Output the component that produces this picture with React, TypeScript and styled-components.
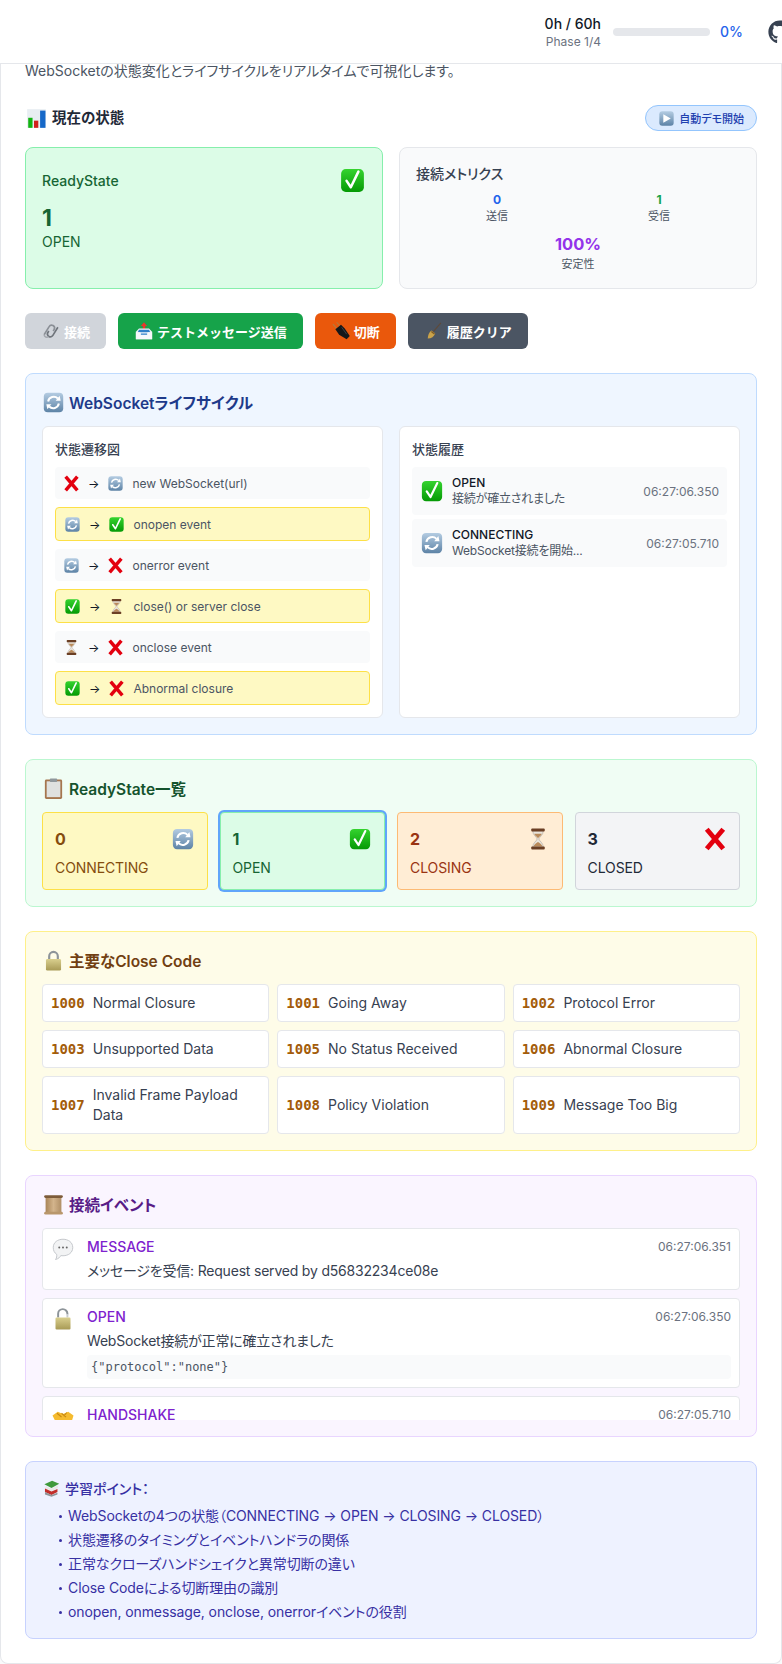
import type { ReactNode } from 'react';
import { createGlobalStyle, styled } from 'styled-components';
import { FaGithub } from 'react-icons/fa';

const GlobalStyle = createGlobalStyle`
  * { box-sizing: border-box; }
  body {
    margin: 0;
    background: #f9fafb;
    color: #111827;
    font-family: Inter, "Noto Sans CJK JP", sans-serif;
    font-feature-settings: "palt";
  }
  h2, h3, h4, p, ul { margin: 0; padding: 0; }
`;

type EmojiName =
  | 'check' | 'cross' | 'refresh' | 'hourglass' | 'chart' | 'play' | 'link' | 'outbox' | 'plug'
  | 'broom' | 'clipboard' | 'lock' | 'openLock' | 'scroll' | 'speech' | 'handshake' | 'books';

const boxGradient = (
  <defs>
    <linearGradient id="steel" x1="0" y1="0" x2="0" y2="1">
      <stop offset="0" stopColor="#b4cce2" />
      <stop offset="1" stopColor="#5d83a6" />
    </linearGradient>
    <linearGradient id="greenbox" x1="0" y1="0" x2="0" y2="1">
      <stop offset="0" stopColor="#35d32f" />
      <stop offset="1" stopColor="#059a05" />
    </linearGradient>
    <linearGradient id="brass" x1="0" y1="0" x2="0" y2="1">
      <stop offset="0" stopColor="#d9cf8e" />
      <stop offset="1" stopColor="#a89a55" />
    </linearGradient>
    <linearGradient id="parchment" x1="0" y1="0" x2="1" y2="0">
      <stop offset="0" stopColor="#a98558" />
      <stop offset="0.5" stopColor="#d3b48c" />
      <stop offset="1" stopColor="#b08f66" />
    </linearGradient>
  </defs>
);

const emojiGlyphs: Record<EmojiName, ReactNode> = {
  check: (
    <>
      <rect x="2.5" y="2.5" width="27" height="27" rx="5.5" fill="url(#greenbox)" />
      <path d="M9 16.5l5 7.5L23 5.5" fill="none" stroke="#fff" strokeWidth="3" strokeLinecap="round" strokeLinejoin="round" />
    </>
  ),
  cross: <path d="M5 3L27 29M27 3L5 29" stroke="#e3000f" strokeWidth="6.5" />,
  refresh: (
    <>
      <rect x="2.5" y="2.5" width="27" height="27" rx="5.5" fill="url(#steel)" />
      <path d="M8.5 14.5a8 8 0 0 1 13.5-4" fill="none" stroke="#fff" strokeWidth="2.8" />
      <path d="M19 13.5h7l-1.5-7z" fill="#fff" />
      <path d="M23.5 17.5a8 8 0 0 1-13.5 4" fill="none" stroke="#fff" strokeWidth="2.8" />
      <path d="M13 18.5H6l1.5 7z" fill="#fff" />
    </>
  ),
  hourglass: (
    <>
      <path d="M9 5h14c0 6-5 8-6 11 1 3 6 5 6 11H9c0-6 5-8 6-11-1-3-6-5-6-11z" fill="#e9e4dc" stroke="#b9b0a6" />
      <path d="M11 9h10c-1 3-4 4-5 6-1-2-4-3-5-6zM10 26c1-3 4-5 6-6 2 1 5 3 6 6z" fill="#b98a5a" />
      <rect x="7" y="2" width="18" height="4" rx="1.2" fill="#6b3f24" />
      <rect x="7" y="26" width="18" height="4" rx="1.2" fill="#6b3f24" />
    </>
  ),
  chart: (
    <>
      <rect x="3" y="3" width="26" height="26" fill="#e8eef2" />
      <rect x="4.5" y="15" width="6" height="14" fill="#12b312" />
      <rect x="12.5" y="19" width="6" height="10" fill="#d0201c" />
      <rect x="21" y="5" width="7.5" height="24" fill="#1668c8" />
    </>
  ),
  play: (
    <>
      <rect x="2.5" y="2.5" width="27" height="27" rx="5.5" fill="url(#steel)" />
      <path d="M10 8l14 8-14 8z" fill="#fff" />
    </>
  ),
  link: (
    <>
      <path d="M5 22l8-13a4.6 4.6 0 0 1 8 4.6l-1.5 2.4" fill="none" stroke="#8a8f96" strokeWidth="2.6" />
      <path d="M27 10l-8 13a4.6 4.6 0 0 1-8-4.6l1.5-2.4" fill="none" stroke="#6f747b" strokeWidth="2.6" />
      <path d="M5 22a4.4 4.4 0 0 0 7 3" fill="none" stroke="#a4a8ae" strokeWidth="2.6" />
    </>
  ),
  outbox: (
    <>
      <path d="M16 2l5 6h-3v8h-4V8h-3z" fill="#e8362c" />
      <path d="M3 17l5-5h16l5 5v12H3z" fill="#eef3f7" />
      <path d="M6 18h20l-2-4H8z" fill="#2e7fc9" />
      <path d="M3 18h7l2 4h8l2-4h7v11H3z" fill="#f5f8fb" />
      <path d="M11 20h10v2H11z" fill="#2e7fc9" />
    </>
  ),
  plug: (
    <>
      <path d="M3 5l8 9M9 2l7 8" stroke="#b07c40" strokeWidth="1.8" />
      <path d="M7 13l9-7 6 6 8 12-5 5-12-7z" fill="#15171a" />
      <path d="M17 10l8 11" stroke="#4a4e54" strokeWidth="1.2" />
    </>
  ),
  broom: (
    <>
      <path d="M27 3L15 17" stroke="#5e4a3a" strokeWidth="1.8" />
      <path d="M12 15l6 5c-2 5-6 8-12 8 0-5 2-10 6-13z" fill="#c9a24a" />
      <path d="M12.5 16l5 4-1.4 1.4-5-4z" fill="#7c5a26" />
    </>
  ),
  clipboard: (
    <>
      <rect x="4" y="3.5" width="24" height="27" rx="2" fill="#a5764e" />
      <rect x="6.5" y="6" width="19" height="22" fill="#dfe1df" />
      <rect x="11" y="2" width="10" height="5" rx="1" fill="#8f979b" />
    </>
  ),
  lock: (
    <>
      <path d="M10 15V10a6 6 0 0 1 12 0v5" fill="none" stroke="#8d9499" strokeWidth="3" />
      <rect x="5.5" y="14" width="21" height="16" rx="2" fill="url(#brass)" />
    </>
  ),
  openLock: (
    <>
      <path d="M9.5 14V9a6.2 6.2 0 0 1 12.4 0v1" fill="none" stroke="#8d9499" strokeWidth="2.6" />
      <path d="M21.9 10v4" stroke="#c9ccce" strokeWidth="2.6" />
      <rect x="6" y="14" width="20" height="16" rx="1.5" fill="url(#brass)" />
    </>
  ),
  scroll: (
    <>
      <rect x="5" y="5" width="22" height="23" fill="url(#parchment)" />
      <rect x="3" y="3" width="26" height="4" rx="2" fill="#7d5c3a" />
      <rect x="3" y="26" width="26" height="4" rx="2" fill="#b9976c" />
    </>
  ),
  speech: (
    <>
      <path d="M16 3c7 0 13 4 13 11s-6 11-13 11c-1 0-2 0-3-.2C12 27 10 29 6 30c1.500-2 2-4.500 1.500-7C4.500 21 3 18 3 14 3 7 9 3 16 3z" fill="#f2f3f4" stroke="#bfc3c7" strokeWidth="1.2" />
      <circle cx="11" cy="14" r="1.300" fill="#666" />
      <circle cx="16" cy="14" r="1.300" fill="#666" />
      <circle cx="21" cy="14" r="1.300" fill="#666" />
    </>
  ),
  handshake: (
    <>
      <path d="M2 14l7-5 7 3 7-3 7 5-3 10-5 3-7 0-9-5z" fill="#f5bb2f" />
      <path d="M8 11l6 5M14 11l6 5M21 10l-4 5" stroke="#c98a12" strokeWidth="1.500" />
    </>
  ),
  books: (
    <>
      <path d="M4 9l13-6 12 5-13 7z" fill="#3f9a3c" />
      <path d="M6 12l10 4 11-5v4l-11 5-10-4z" fill="#e9e9e6" />
      <path d="M5 16l11 5 10-4v5l-10 5-11-5z" fill="#c22f2b" />
      <path d="M5 22l11 5 10-4v3l-10 4-11-4z" fill="#8f9498" />
    </>
  ),
};

const EmojiSvg = styled.svg<{ $size: number }>`
  display: block;
  flex-shrink: 0;
  width: ${({ $size }) => $size}px;
  height: ${({ $size }) => $size}px;
`;

const Emoji = ({ name, size }: { name: EmojiName; size: number }) => (
  <EmojiSvg $size={size} viewBox="0 0 32 32" aria-hidden="true">
    {boxGradient}
    {emojiGlyphs[name]}
  </EmojiSvg>
);

const TopBar = styled.header`
  display: flex;
  justify-content: flex-end;
  align-items: center;
  height: 64px;
  overflow: hidden;
  background: #fff;
  border-bottom: 1px solid #e5e7eb;
  box-shadow: 0 1px 2px rgba(0, 0, 0, 0.05);
`;

const TopBarInner = styled.div`
  display: flex;
  flex-shrink: 0;
  align-items: center;
  margin-right: -10px;
  color: #374151;
`;

const TimeBlock = styled.div`
  text-align: right;
  margin-right: 12px;
`;

const TimeValue = styled.div`
  font-size: 14px;
  line-height: 20px;
  font-weight: 500;
  color: #111827;
`;

const PhaseLabel = styled.div`
  font-size: 12px;
  line-height: 16px;
  color: #6b7280;
`;

const ProgressTrack = styled.div`
  width: 97px;
  height: 8px;
  border-radius: 4px;
  background: #e5e7eb;
`;

const ProgressValue = styled.span`
  width: 24px;
  margin: 0 24px 0 10px;
  font-size: 14px;
  font-weight: 500;
  color: #2563eb;
`;

const Card = styled.main`
  background: #fff;
  border: 1px solid #e5e7eb;
  border-top: 0;
  border-radius: 0 0 8px 8px;
  padding: 0 24px 24px;
`;

const Description = styled.p`
  font-size: 14px;
  line-height: 14px;
  color: #4b5563;
`;

const StatusHead = styled.div`
  display: flex;
  justify-content: space-between;
  align-items: center;
  height: 26px;
  margin-top: 27px;
`;

const StatusTitle = styled.h2`
  display: flex;
  align-items: center;
  gap: 4px;
  font-size: 14.5px;
  line-height: 24px;
  font-weight: 600;
  color: #1f2937;
`;

const DemoButton = styled.button`
  display: flex;
  align-items: center;
  gap: 4px;
  height: 26px;
  padding: 0 12px;
  border: 1px solid #93c5fd;
  border-radius: 13px;
  background: #dbeafe;
  color: #1e40af;
  font: inherit;
  font-size: 11px;
  font-weight: 500;
`;

const TopGrid = styled.div`
  display: grid;
  grid-template-columns: 1fr 1fr;
  gap: 16px;
  margin-top: 16px;
`;

const StateCard = styled.section`
  height: 142px;
  padding: 19px 16px;
  background: #dcfce7;
  border: 1px solid #86efac;
  border-radius: 8px;
  color: #166534;
`;

const StateCardHead = styled.div`
  display: flex;
  justify-content: space-between;
  align-items: center;
  font-size: 14px;
  font-weight: 500;
`;

const StateNumber = styled.div`
  margin-top: 8px;
  font-size: 23px;
  line-height: 32px;
  font-weight: 700;
`;

const StateName = styled.div`
  font-size: 14px;
  line-height: 16px;
`;

const MetricsCard = styled.section`
  height: 142px;
  padding: 16px;
  background: #f9fafb;
  border: 1px solid #e5e7eb;
  border-radius: 8px;
`;

const MetricsTitle = styled.h3`
  font-size: 14px;
  line-height: 20px;
  font-weight: 500;
  color: #374151;
`;

const MetricsGrid = styled.div`
  display: grid;
  grid-template-columns: 1fr 1fr;
  row-gap: 8px;
  margin-top: 8px;
`;

const Metric = styled.div<{ $wide?: boolean }>`
  text-align: center;
  grid-column: ${({ $wide }) => ($wide ? '1 / 3' : 'auto')};
`;

const MetricValue = styled.div<{ $color: string; $big?: boolean }>`
  font-size: ${({ $big }) => ($big ? 16.5 : 12)}px;
  line-height: ${({ $big }) => ($big ? 24 : 16)}px;
  font-weight: 700;
  color: ${({ $color }) => $color};
`;

const MetricLabel = styled.div`
  font-size: 11px;
  line-height: 16px;
  color: #4b5563;
`;

const ButtonRow = styled.div`
  display: flex;
  gap: 12px;
  margin-top: 24px;
`;

const ActionButton = styled.button<{ $bg: string }>`
  display: flex;
  align-items: center;
  gap: 3px;
  height: 36px;
  padding: 0 16px;
  border: 0;
  border-radius: 6px;
  background: ${({ $bg }) => $bg};
  color: #fff;
  font: inherit;
  font-size: 13px;
  font-weight: 600;
  font-feature-settings: normal;
`;

const Section = styled.section<{ $bg: string; $border: string }>`
  margin-top: 24px;
  padding: 16px;
  background: ${({ $bg }) => $bg};
  border: 1px solid ${({ $border }) => $border};
  border-radius: 8px;
`;

const SectionTitle = styled.h3<{ $color: string }>`
  display: flex;
  align-items: center;
  gap: 4px;
  height: 24px;
  margin-bottom: 12px;
  font-size: 15.5px;
  font-weight: 600;
  color: ${({ $color }) => $color};
`;

const LifecycleGrid = styled.div`
  display: grid;
  grid-template-columns: 1fr 1fr;
  gap: 16px;
`;

const Panel = styled.div`
  padding: 12px;
  background: #fff;
  border: 1px solid #e5e7eb;
  border-radius: 6px;
`;

const PanelTitle = styled.h4`
  margin-bottom: 8px;
  font-size: 13px;
  line-height: 20px;
  font-weight: 500;
  color: #374151;
`;

const RowStack = styled.div`
  display: flex;
  flex-direction: column;
  gap: 8px;
`;

const TransitionRow = styled.div<{ $active: boolean }>`
  display: flex;
  align-items: center;
  gap: 8px;
  height: ${({ $active }) => ($active ? 34 : 32)}px;
  padding: 0 8px;
  background: ${({ $active }) => ($active ? '#fef9c3' : '#f9fafb')};
  border: ${({ $active }) => ($active ? '1px solid #fde047' : '0')};
  border-radius: 4px;
  font-size: 12px;
  color: #4b5563;
`;

const Arrow = styled.span`
  color: #111827;
`;

const HistoryStack = styled.div`
  display: flex;
  flex-direction: column;
  gap: 4px;
`;

const HistoryRow = styled.div`
  display: flex;
  align-items: center;
  gap: 8px;
  height: 48px;
  padding: 0 8px;
  background: #f9fafb;
  border-radius: 4px;
`;

const HistoryBody = styled.div`
  flex: 1;
  font-size: 12px;
  line-height: 16px;
  letter-spacing: -0.2px;
  color: #4b5563;
`;

const HistoryState = styled.div`
  font-weight: 500;
  letter-spacing: 0;
  color: #111827;
`;

const HistoryTime = styled.div`
  font-size: 12px;
  color: #6b7280;
`;

const StateGrid = styled.div`
  display: grid;
  grid-template-columns: repeat(4, 1fr);
  gap: 12px;
`;

const StateTile = styled.div<{ $bg: string; $border: string; $color: string; $current?: boolean }>`
  height: 78px;
  padding: 12px;
  background: ${({ $bg }) => $bg};
  border: 1px solid ${({ $border }) => $border};
  border-radius: 4px;
  color: ${({ $color }) => $color};
  box-shadow: ${({ $current }) => ($current ? '0 0 0 2px #60a5fa' : 'none')};
`;

const TileHead = styled.div`
  display: flex;
  justify-content: space-between;
  align-items: center;
  height: 28px;
  font-size: 16px;
  font-weight: 700;
`;

const TileName = styled.div`
  margin-top: 5px;
  font-size: 14px;
  line-height: 20px;
  letter-spacing: -0.1px;
`;

const CodeGrid = styled.div`
  display: grid;
  grid-template-columns: repeat(3, 1fr);
  gap: 8px;
`;

const CodeRow = styled.div`
  display: flex;
  align-items: center;
  gap: 8px;
  padding: 8px;
  background: #fff;
  border: 1px solid #e5e7eb;
  border-radius: 4px;
  font-size: 14px;
  line-height: 20px;
  color: #374151;
`;

const CodeNumber = styled.span`
  font-family: "DejaVu Sans Mono", monospace;
  font-size: 14px;
  font-weight: 700;
  color: #a35c0a;
`;

const EventList = styled.div`
  display: flex;
  flex-direction: column;
  gap: 8px;
  height: 192px;
  overflow: hidden;
`;

const EventItem = styled.article`
  display: flex;
  flex-shrink: 0;
  gap: 12px;
  padding: 8px;
  background: #fff;
  border: 1px solid #e5e7eb;
  border-radius: 4px;
`;

const EventBody = styled.div`
  flex: 1;
`;

const EventHead = styled.div`
  display: flex;
  justify-content: space-between;
  line-height: 20px;
`;

const EventType = styled.span`
  font-size: 14px;
  font-weight: 500;
  color: #7e22ce;
`;

const EventTime = styled.span`
  font-size: 12px;
  color: #6b7280;
`;

const EventMessage = styled.p`
  margin-top: 4px;
  font-size: 14px;
  line-height: 20px;
  letter-spacing: -0.2px;
  color: #374151;
`;

const EventJson = styled.pre`
  height: 24px;
  margin: 4px 0 0;
  padding: 4px;
  background: #f9fafb;
  border-radius: 4px;
  font-family: "DejaVu Sans Mono", monospace;
  font-size: 12px;
  line-height: 16px;
  color: #4b5563;
`;

const LearnBox = styled.section`
  margin-top: 24px;
  padding: 16px;
  background: #eef2ff;
  border: 1px solid #c7d2fe;
  border-radius: 8px;
  color: #3730a3;
`;

const LearnTitle = styled.h4`
  display: flex;
  align-items: center;
  gap: 4px;
  height: 20px;
  margin-bottom: 8px;
  font-size: 14px;
  font-weight: 500;
`;

const LearnList = styled.ul`
  display: flex;
  flex-direction: column;
  gap: 4px;
  padding-left: 17px;
  list-style: none;
`;

const LearnItem = styled.li`
  display: flex;
  align-items: center;
  gap: 6px;
  font-size: 14px;
  line-height: 20px;
  letter-spacing: -0.1px;

  &::before {
    content: '';
    width: 3px;
    height: 3px;
    border-radius: 50%;
    background: currentColor;
  }
`;

const transitions: { from: EmojiName; to: EmojiName; label: string; active: boolean }[] = [
  { from: 'cross', to: 'refresh', label: 'new WebSocket(url)', active: false },
  { from: 'refresh', to: 'check', label: 'onopen event', active: true },
  { from: 'refresh', to: 'cross', label: 'onerror event', active: false },
  { from: 'check', to: 'hourglass', label: 'close() or server close', active: true },
  { from: 'hourglass', to: 'cross', label: 'onclose event', active: false },
  { from: 'check', to: 'cross', label: 'Abnormal closure', active: true },
];

const history: { icon: EmojiName; state: string; text: string; time: string }[] = [
  { icon: 'check', state: 'OPEN', text: '接続が確立されました', time: '06:27:06.350' },
  { icon: 'refresh', state: 'CONNECTING', text: 'WebSocket接続を開始...', time: '06:27:05.710' },
];

const stateTiles: { value: number; name: string; icon: EmojiName; bg: string; border: string; color: string; current?: boolean }[] = [
  { value: 0, name: 'CONNECTING', icon: 'refresh', bg: '#fef9c3', border: '#fde047', color: '#854d0e' },
  { value: 1, name: 'OPEN', icon: 'check', bg: '#dcfce7', border: '#86efac', color: '#166534', current: true },
  { value: 2, name: 'CLOSING', icon: 'hourglass', bg: '#ffedd5', border: '#fdba74', color: '#9a3412' },
  { value: 3, name: 'CLOSED', icon: 'cross', bg: '#f3f4f6', border: '#d1d5db', color: '#1f2937' },
];

const closeCodes: [string, string][] = [
  ['1000', 'Normal Closure'],
  ['1001', 'Going Away'],
  ['1002', 'Protocol Error'],
  ['1003', 'Unsupported Data'],
  ['1005', 'No Status Received'],
  ['1006', 'Abnormal Closure'],
  ['1007', 'Invalid Frame Payload Data'],
  ['1008', 'Policy Violation'],
  ['1009', 'Message Too Big'],
];

const events: { icon: EmojiName; type: string; time: string; message?: string; json?: string }[] = [
  { icon: 'speech', type: 'MESSAGE', time: '06:27:06.351', message: 'メッセージを受信: Request served by d56832234ce08e' },
  { icon: 'openLock', type: 'OPEN', time: '06:27:06.350', message: 'WebSocket接続が正常に確立されました', json: '{"protocol":"none"}' },
  { icon: 'handshake', type: 'HANDSHAKE', time: '06:27:05.710' },
];

const learnPoints = [
  'WebSocketの4つの状態（CONNECTING → OPEN → CLOSING → CLOSED）',
  '状態遷移のタイミングとイベントハンドラの関係',
  '正常なクローズハンドシェイクと異常切断の違い',
  'Close Codeによる切断理由の識別',
  'onopen, onmessage, onclose, onerrorイベントの役割',
];

export default function App() {
  return (
    <>
      <GlobalStyle />
      <TopBar>
        <TopBarInner>
          <TimeBlock>
            <TimeValue>0h / 60h</TimeValue>
            <PhaseLabel>Phase 1/4</PhaseLabel>
          </TimeBlock>
          <ProgressTrack />
          <ProgressValue>0%</ProgressValue>
          <FaGithub size={24} />
        </TopBarInner>
      </TopBar>
      <Card>
        <Description>WebSocketの状態変化とライフサイクルをリアルタイムで可視化します。</Description>

        <StatusHead>
          <StatusTitle>
            <Emoji name="chart" size={23} />
            現在の状態
          </StatusTitle>
          <DemoButton>
            <Emoji name="play" size={17} />
            自動デモ開始
          </DemoButton>
        </StatusHead>

        <TopGrid>
          <StateCard>
            <StateCardHead>
              ReadyState
              <Emoji name="check" size={27} />
            </StateCardHead>
            <StateNumber>1</StateNumber>
            <StateName>OPEN</StateName>
          </StateCard>
          <MetricsCard>
            <MetricsTitle>接続メトリクス</MetricsTitle>
            <MetricsGrid>
              <Metric>
                <MetricValue $color="#2563eb">0</MetricValue>
                <MetricLabel>送信</MetricLabel>
              </Metric>
              <Metric>
                <MetricValue $color="#16a34a">1</MetricValue>
                <MetricLabel>受信</MetricLabel>
              </Metric>
              <Metric $wide>
                <MetricValue $color="#9333ea" $big>100%</MetricValue>
                <MetricLabel>安定性</MetricLabel>
              </Metric>
            </MetricsGrid>
          </MetricsCard>
        </TopGrid>

        <ButtonRow>
          <ActionButton $bg="#d1d5db">
            <Emoji name="link" size={20} />
            接続
          </ActionButton>
          <ActionButton $bg="#16a34a">
            <Emoji name="outbox" size={20} />
            テストメッセージ送信
          </ActionButton>
          <ActionButton $bg="#ea580c">
            <Emoji name="plug" size={20} />
            切断
          </ActionButton>
          <ActionButton $bg="#4b5563">
            <Emoji name="broom" size={20} />
            履歴クリア
          </ActionButton>
        </ButtonRow>

        <Section $bg="#eff6ff" $border="#bfdbfe">
          <SectionTitle $color="#1e3a8a">
            <Emoji name="refresh" size={23} />
            WebSocketライフサイクル
          </SectionTitle>
          <LifecycleGrid>
            <Panel>
              <PanelTitle>状態遷移図</PanelTitle>
              <RowStack>
                {transitions.map((row) => (
                  <TransitionRow key={row.label} $active={row.active}>
                    <Emoji name={row.from} size={17} />
                    <Arrow>→</Arrow>
                    <Emoji name={row.to} size={17} />
                    {row.label}
                  </TransitionRow>
                ))}
              </RowStack>
            </Panel>
            <Panel>
              <PanelTitle>状態履歴</PanelTitle>
              <HistoryStack>
                {history.map((item) => (
                  <HistoryRow key={item.state}>
                    <Emoji name={item.icon} size={24} />
                    <HistoryBody>
                      <HistoryState>{item.state}</HistoryState>
                      {item.text}
                    </HistoryBody>
                    <HistoryTime>{item.time}</HistoryTime>
                  </HistoryRow>
                ))}
              </HistoryStack>
            </Panel>
          </LifecycleGrid>
        </Section>

        <Section $bg="#f0fdf4" $border="#bbf7d0">
          <SectionTitle $color="#14532d">
            <Emoji name="clipboard" size={23} />
            ReadyState一覧
          </SectionTitle>
          <StateGrid>
            {stateTiles.map((tile) => (
              <StateTile key={tile.value} $bg={tile.bg} $border={tile.border} $color={tile.color} $current={tile.current}>
                <TileHead>
                  {tile.value}
                  <Emoji name={tile.icon} size={24} />
                </TileHead>
                <TileName>{tile.name}</TileName>
              </StateTile>
            ))}
          </StateGrid>
        </Section>

        <Section $bg="#fefce8" $border="#fef08a">
          <SectionTitle $color="#713f12">
            <Emoji name="lock" size={23} />
            主要なClose Code
          </SectionTitle>
          <CodeGrid>
            {closeCodes.map(([code, label]) => (
              <CodeRow key={code}>
                <CodeNumber>{code}</CodeNumber>
                {label}
              </CodeRow>
            ))}
          </CodeGrid>
        </Section>

        <Section $bg="#faf5ff" $border="#e9d5ff">
          <SectionTitle $color="#581c87">
            <Emoji name="scroll" size={23} />
            接続イベント
          </SectionTitle>
          <EventList>
            {events.map((event) => (
              <EventItem key={event.type}>
                <Emoji name={event.icon} size={24} />
                <EventBody>
                  <EventHead>
                    <EventType>{event.type}</EventType>
                    <EventTime>{event.time}</EventTime>
                  </EventHead>
                  {event.message && <EventMessage>{event.message}</EventMessage>}
                  {event.json && <EventJson>{event.json}</EventJson>}
                </EventBody>
              </EventItem>
            ))}
          </EventList>
        </Section>

        <LearnBox>
          <LearnTitle>
            <Emoji name="books" size={19} />
            学習ポイント：
          </LearnTitle>
          <LearnList>
            {learnPoints.map((point) => (
              <LearnItem key={point}>{point}</LearnItem>
            ))}
          </LearnList>
        </LearnBox>
      </Card>
    </>
  );
}
